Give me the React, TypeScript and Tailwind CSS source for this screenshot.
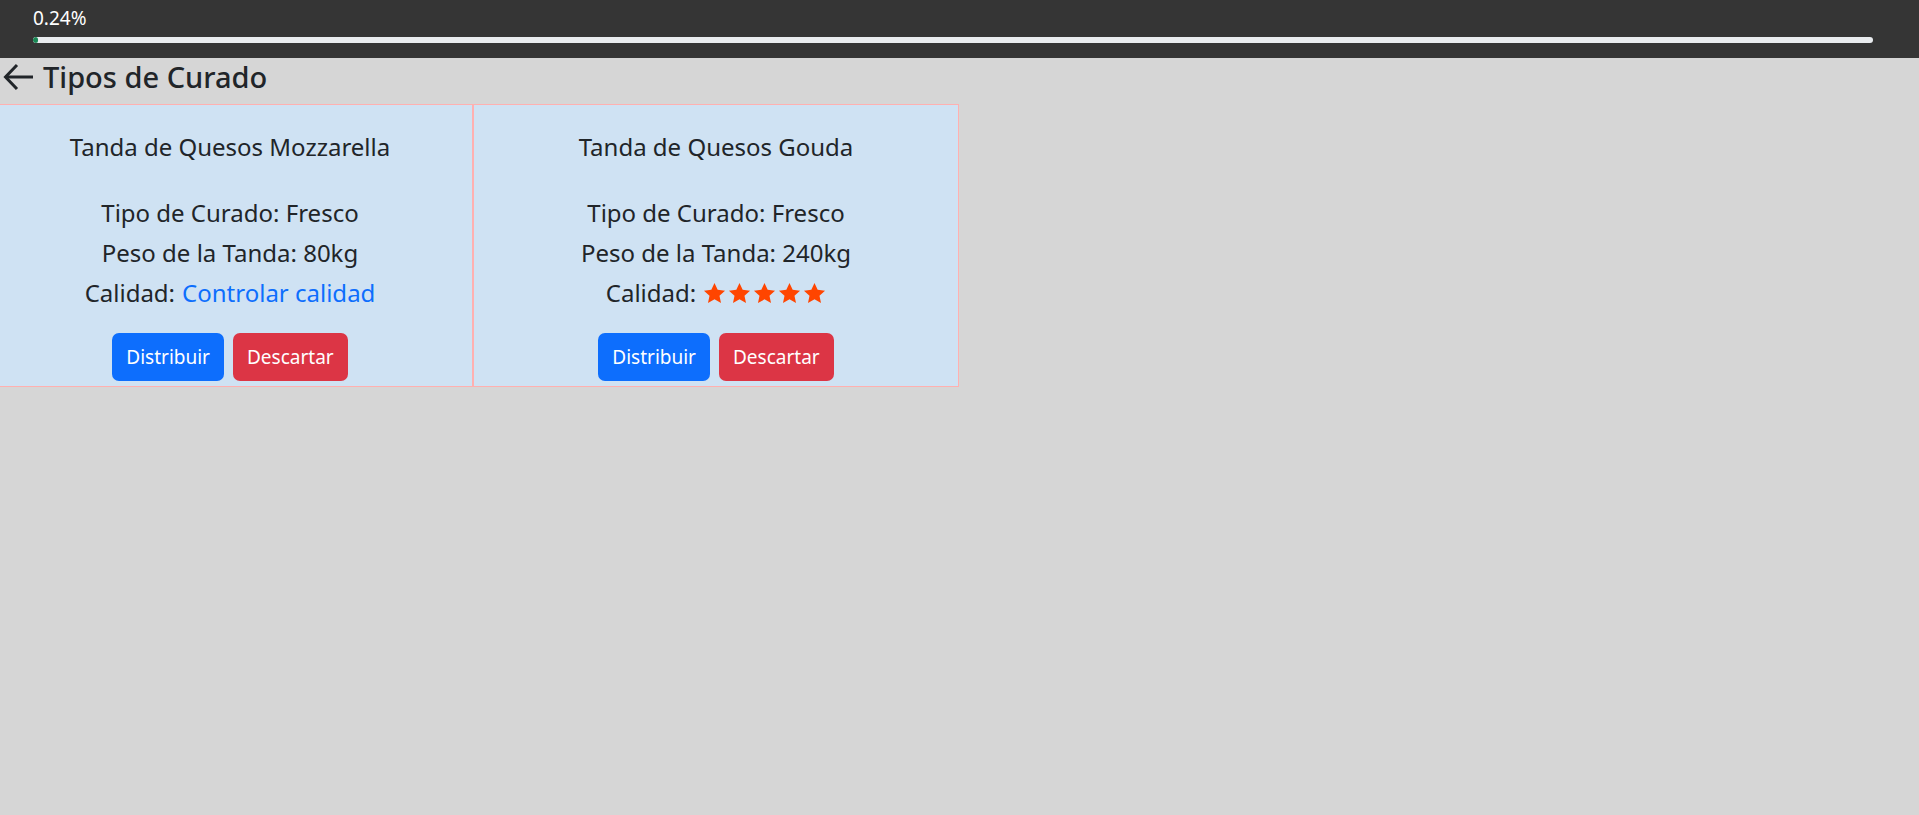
import React from "react";

type Tanda = {
  nombre: string;
  curado: string;
  peso: string;
  calidad: number | null;
};

const tandas: Tanda[] = [
  { nombre: "Tanda de Quesos Mozzarella", curado: "Fresco", peso: "80kg", calidad: null },
  { nombre: "Tanda de Quesos Gouda", curado: "Fresco", peso: "240kg", calidad: 5 },
];

const Star: React.FC = () => (
  <svg width="23" height="23" viewBox="0 0 24 24" fill="#ff4500">
    <polygon points="12,1 15.3,8.1 23,9 17.2,14.3 18.8,22 12,18.1 5.2,22 6.8,14.3 1,9 8.7,8.1" />
  </svg>
);

const BackArrow: React.FC = () => (
  <svg width="31" height="28" viewBox="0 0 31 28" fill="none" stroke="#212529" strokeWidth="3">
    <path d="M30 14H3" />
    <path d="M14 2 2.5 14 14 26" strokeLinejoin="miter" />
  </svg>
);

const TandaCard: React.FC<{ tanda: Tanda }> = ({ tanda }) => (
  <div className="w-[486px] shrink-0 border border-[#ffb0b0] bg-[#cfe2f3] pt-[27px] pb-[5px] text-center text-[24px] text-[#212529]">
    <div className="leading-[30px]">{tanda.nombre}</div>
    <div className="mt-[31px]">
      <div className="leading-[40px]">Tipo de Curado: {tanda.curado}</div>
      <div className="leading-[40px]">Peso de la Tanda: {tanda.peso}</div>
      <div className="flex h-[40px] items-center justify-center gap-[7px]">
        <span>Calidad:</span>
        {tanda.calidad === null ? (
          <a href="#" className="text-[#0d6efd]">
            Controlar calidad
          </a>
        ) : (
          <span className="flex items-center gap-[2px]">
            {Array.from({ length: tanda.calidad }).map((_, i) => (
              <Star key={i} />
            ))}
          </span>
        )}
      </div>
    </div>
    <div className="mt-[20px] flex justify-center gap-[9px]">
      <button className="h-[48px] rounded-[7px] bg-[#0d6efd] px-[14px] text-[19px] text-white">
        Distribuir
      </button>
      <button className="h-[48px] rounded-[7px] bg-[#dc3545] px-[14px] text-[19px] text-white">
        Descartar
      </button>
    </div>
  </div>
);

const App: React.FC = () => {
  return (
    <div
      className="min-h-screen overflow-hidden bg-[#d6d6d6]"
      style={{ fontFamily: '"Noto Sans", "Open Sans", sans-serif' }}
    >
      <div className="h-[58px] bg-[#353535] px-[33px] pt-[3px]">
        <div className="text-[19px] leading-[30px] text-white">0.24%</div>
        <div className="mt-[4px] mr-[13px] h-[6px] overflow-hidden rounded-full bg-[#e9ecef]">
          <div className="h-full w-[5px] rounded-full bg-[#198754]" />
        </div>
      </div>

      <div className="flex h-[46px] items-center gap-[9px] pl-[3px] pb-[8px]">
        <BackArrow />
        <h4 className="text-[29px] font-medium leading-[36px] text-[#212529]">
          Tipos de Curado
        </h4>
      </div>

      <div className="ml-[-13px] flex">
        {tandas.map((t) => (
          <TandaCard key={t.nombre} tanda={t} />
        ))}
      </div>
    </div>
  );
};

export default App;
